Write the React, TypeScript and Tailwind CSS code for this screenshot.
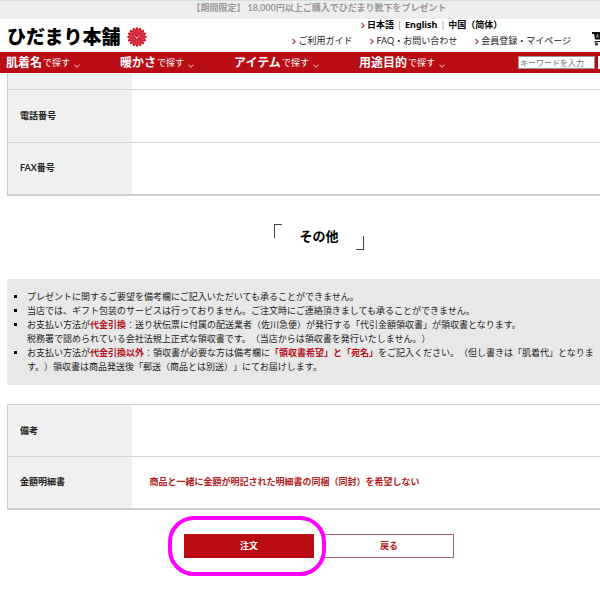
import type { ReactNode } from "react";

const menu = [
  { name: "肌着名", href: "#name" },
  { name: "暖かさ", href: "#warmth" },
  { name: "アイテム", href: "#item" },
  { name: "用途目的", href: "#purpose" },
];

const links = ["ご利用ガイド", "FAQ・お問い合わせ", "会員登録・マイページ"];

function Arrow() {
  return (
    <svg viewBox="0 0 4 7" className="w-1 h-[7px] mr-[2px] shrink-0" fill="none" stroke="#b8303a" strokeWidth="1.1">
      <path d="M.5.8 3.2 3.5.5 6.2" />
    </svg>
  );
}

function Crest() {
  const petals = Array.from({ length: 16 }, (_, i) => i * 22.5);
  return (
    <svg viewBox="-10 -10 20 20" className="size-5 shrink-0" aria-hidden="true">
      <circle r="8" fill="#d01c2c" />
      {petals.map((a) => (
        <g key={a} transform={`rotate(${a})`}>
          <ellipse cy="-8.200" rx="1.3" ry="1.6" fill="#d01c2c" />
          <path d="M0-7.2v1.6" stroke="#f3b9bd" strokeWidth=".5" />
        </g>
      ))}
      <circle r="4" fill="none" stroke="#f3b9bd" strokeWidth=".5" strokeDasharray="1.6 1.4" />
      <path d="M-2.5-1 0 .8 2.6-1.2M0 .8v1.4" fill="none" stroke="#fff" strokeWidth=".7" />
    </svg>
  );
}

function Cart() {
  return (
    <svg viewBox="0 0 30 16" className="w-[30px] h-4" aria-hidden="true">
      <path d="M0 1h25l-3 7.500H3L2 3H0z" fill="#111" />
      <path d="m4.500 6.500 1-3 1 3M8.500 3.500v3M11 3.500v3M13.500 3.500v3" fill="none" stroke="#ccc" strokeWidth=".8" />
      <path d="M3 12v-1.500h18" fill="none" stroke="#222" strokeWidth="1" />
      <circle cx="4.500" cy="13" r="1.500" fill="#222" />
      <circle cx="18" cy="13" r="1.500" fill="#222" />
    </svg>
  );
}

function Row({ label, children }: { label: string; children?: ReactNode }) {
  return (
    <tr className="border-t border-[#d4d4d4]">
      <th scope="row" className="w-[124px] bg-[#f0f0f0] pl-3 text-left font-bold">{label}</th>
      <td className="pl-[18px] font-bold text-[#b01c24]">{children}</td>
    </tr>
  );
}

function Red({ children }: { children: ReactNode }) {
  return <strong className="font-bold text-[#b5121b]">{children}</strong>;
}

export default function App() {
  return (
    <div className="min-h-screen overflow-hidden bg-white font-[Lato,'Noto_Sans_CJK_JP',sans-serif] text-[9px] leading-[14px] text-[#222] [text-spacing-trim:space-all]">
      {/* the page runs a little wider than the window */}
      <div className="-mr-[38px]">
        <header>
          <p className="h-[19px] border-t border-[#d3e0e0] bg-[#eee] text-center font-bold text-[#999]">
            【期間限定】 18,000円以上ご購入でひだまり靴下をプレゼント
          </p>

          <div className="flex h-[33px] items-start justify-between pl-[7px] pr-4">
            <a href="#top" className="flex items-center pt-2 text-[19px] leading-5 font-black text-black">
              ひだまり本舗
              <span className="ml-[6px]"><Crest /></span>
            </a>
            <div className="flex items-start gap-[21px]">
              <div className="-mt-px flex flex-col items-center gap-[2px]">
                <div className="flex items-center font-['Noto_Sans','Noto_Sans_CJK_JP',sans-serif] font-bold text-black">
                  <Arrow />
                  <a href="#ja">日本語</a>
                  <span className="mx-[3px] font-normal text-[#888]">|</span>
                  <a href="#en">English</a>
                  <span className="mx-[3px] font-normal text-[#888]">|</span>
                  <a href="#zh">中国（简体）</a>
                </div>
                <nav className="flex gap-[18px]">
                  {links.map((l) => (
                    <a key={l} href="#guide" className="flex items-center whitespace-nowrap">
                      <Arrow />
                      {l}
                    </a>
                  ))}
                </nav>
              </div>
              <a href="#cart" aria-label="カート" className="mt-3"><Cart /></a>
            </div>
          </div>

          <div className="flex h-[21px] items-center justify-between bg-[#b90c14] pl-[6px] pr-[7px] text-white">
            <nav className="flex gap-10">
              {menu.map((m) => (
                <a key={m.name} href={m.href} className="flex items-center whitespace-nowrap">
                  <b className="mr-px text-[12px]">{m.name}</b>
                  で探す
                  <svg viewBox="0 0 6 4" className="mt-[6px] ml-1 w-[6px] h-1" fill="none" stroke="#fff" strokeWidth=".8">
                    <path d="M.4.6 3 3.300 5.600.6" />
                  </svg>
                </a>
              ))}
            </nav>
            <form className="flex gap-[3px]">
              <input
                type="text"
                aria-label="キーワード"
                placeholder="キーワードを入力"
                className="h-[13px] w-[77px] border border-[#999] bg-white px-px text-[8px] leading-[11px] text-black placeholder:text-[#777]"
              />
              <button type="button" aria-label="検索" className="h-[13px] w-[33px] border border-white bg-white" />
            </form>
          </div>
        </header>

        <main className="px-[7px]">
          <table className="w-full border-collapse border-b-2 border-l border-[#ccc] [&_tr]:h-[53px]">
            <thead>
              <tr className="h-4!">
                <td className="w-[124px] bg-[#f0f0f0]" />
                <td />
              </tr>
            </thead>
            <tbody>
              <Row label="電話番号" />
              <Row label="FAX番号" />
            </tbody>
          </table>

          <div className="mt-7 flex justify-center">
            <div className="flex h-[26px] w-[90px] justify-between">
              <span className="h-[14px] w-2 border-t border-l border-[#444]" />
              <h2 className="pt-[3px] text-[13px] leading-[18px] font-bold text-black">その他</h2>
              <span className="h-[14px] w-2 self-end border-r border-b border-[#444]" />
            </div>
          </div>

          <ul className="mt-[29px] list-[square] bg-[#e8e8e8] pt-[11px] pr-8 pb-[11px] pl-5 whitespace-nowrap marker:text-black">
            <li>プレゼントに関するご要望を備考欄にご記入いただいても承ることができません。</li>
            <li>当店では、ギフト包装のサービスは行っておりません。ご注文時にご連絡頂きましても承ることができません。</li>
            <li>
              お支払い方法が<Red>代金引換</Red>：送り状伝票に付属の配送業者（佐川急便）が発行する「代引金額領収書」が領収書となります。
              <br />
              税務署で認められている会社法規上正式な領収書です。（当店からは領収書を発行いたしません。）
            </li>
            <li>
              お支払い方法が<Red>代金引換以外</Red>：領収書が必要な方は備考欄に<Red>「領収書希望」と「宛名」</Red>をご記入ください。（但し書きは「肌着代」となりま
              <br />
              す。）領収書は商品発送後「郵送（商品とは別送）」にてお届けします。
            </li>
          </ul>

          <table className="mt-[19px] w-full border-collapse border-b-2 border-l border-[#ccc] [&_tr]:h-[52px]">
            <tbody>
              <Row label="備考" />
              <Row label="金額明細書">商品と一緒に金額が明記された明細書の同梱（同封）を希望しない</Row>
            </tbody>
          </table>

          <div className="mt-6 flex justify-center gap-[10px] font-bold">
            <div className="relative">
              <button type="submit" className="block h-6 w-[130px] bg-[#b90c14] text-white">注文</button>
              <span className="pointer-events-none absolute -left-4 -right-3 -inset-y-[18px] z-10 rounded-[26px] border-4 border-[#ff00fc]" />
            </div>
            <button type="button" className="h-6 w-[130px] border border-[#a5646b] text-[#b01c24]">戻る</button>
          </div>
        </main>
      </div>
    </div>
  );
}
